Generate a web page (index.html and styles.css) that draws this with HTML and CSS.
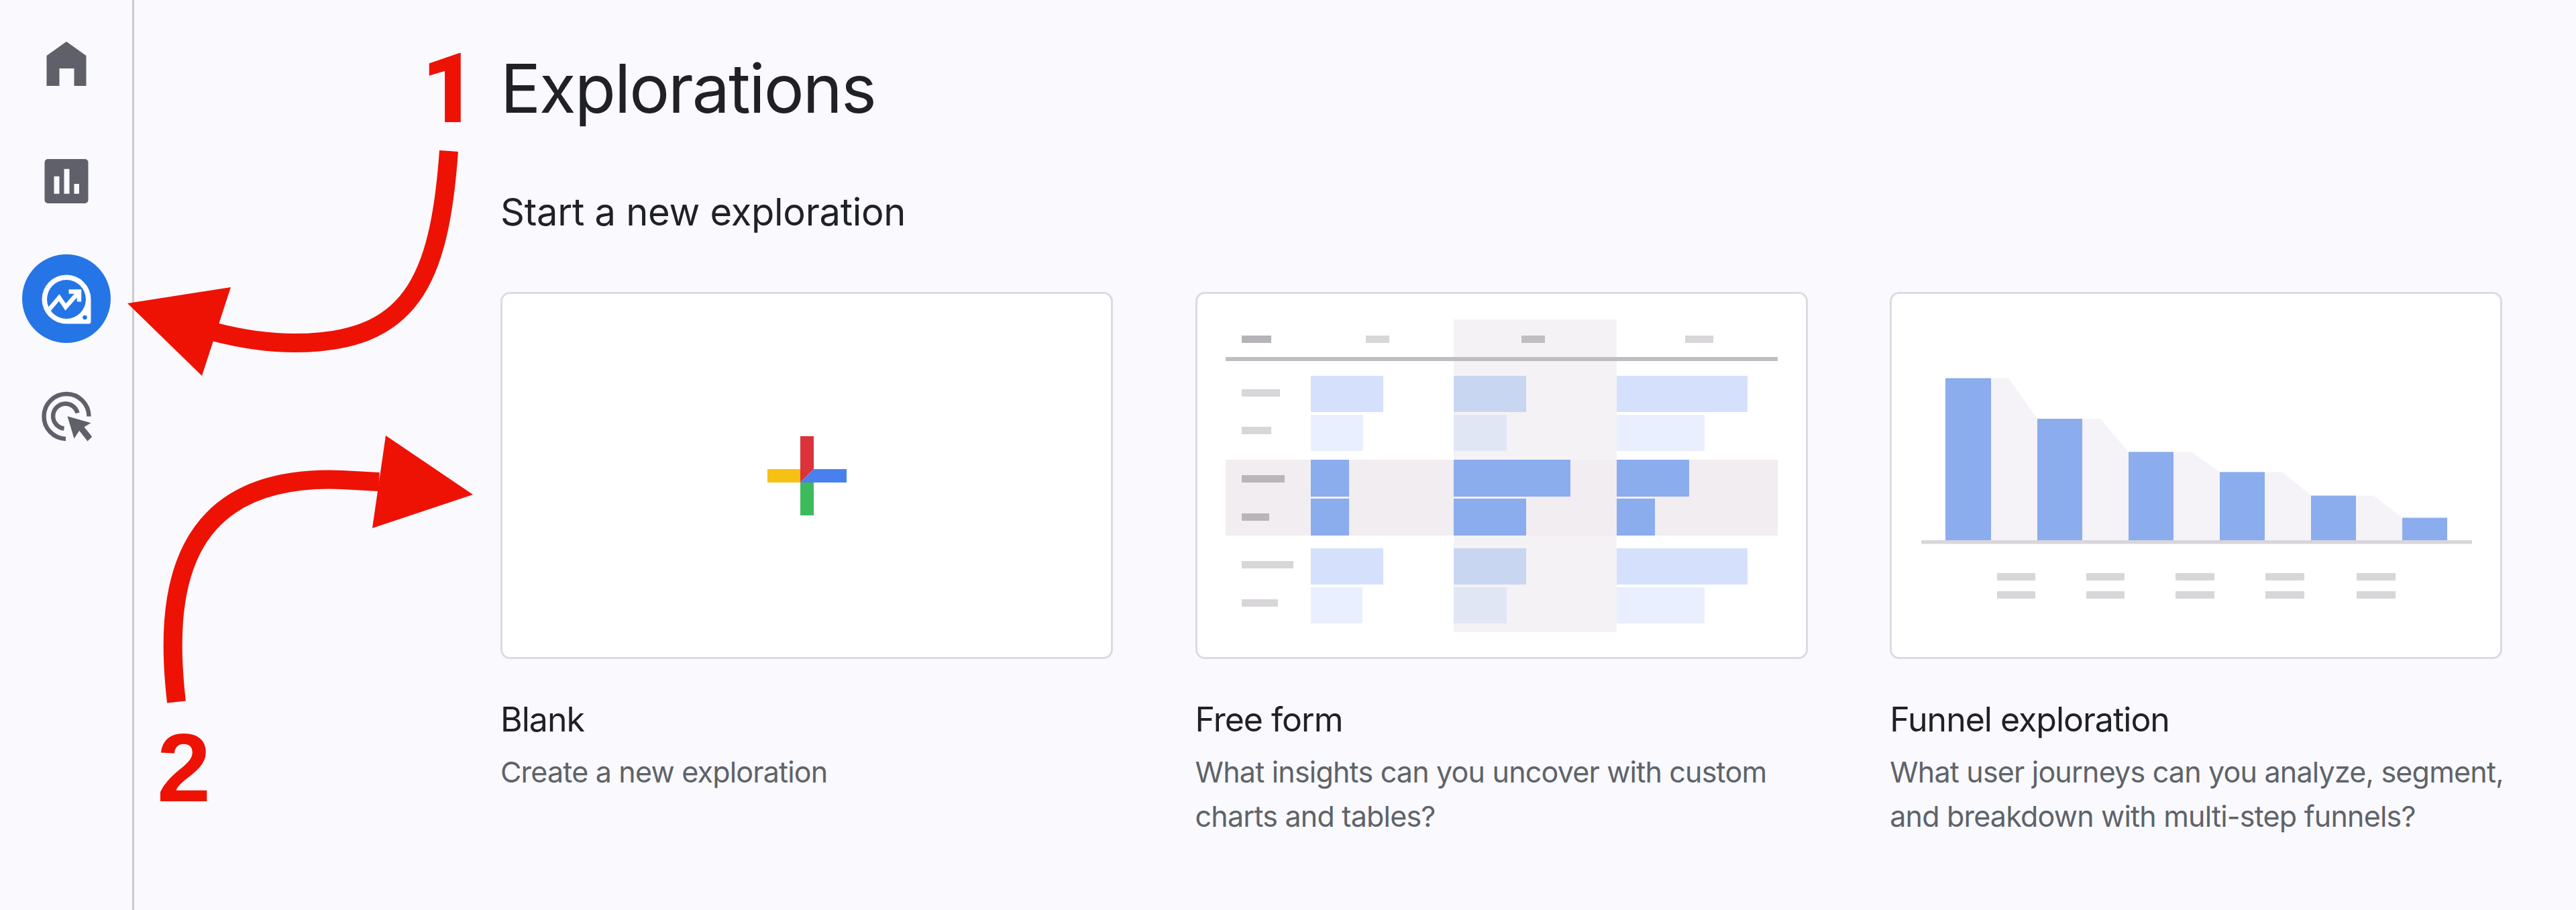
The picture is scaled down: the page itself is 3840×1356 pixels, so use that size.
FILE: index.html
```html
<!DOCTYPE html>
<html lang="en">
<head>
    <meta charset="UTF-8">
    <meta name="viewport" content="width=device-width, initial-scale=1.0">
    <title>Explorations</title>
    <link rel="stylesheet" href="styles.css">
</head>
<body>
    <nav class="sidebar">
        <a class="nav-item">
            <svg class="nav-icon" viewBox="32.5 29 132 132"><path d="M69 83 98.5 62 128 83v45h-18v-26H88v26H69z"/></svg>
        </a>
        <a class="nav-item">
            <svg class="nav-icon" viewBox="32.5 204 132 132">
                <path fill-rule="evenodd" d="M71 237h55a5 5 0 0 1 5 5v56a5 5 0 0 1-5 5H71a5 5 0 0 1-5-5v-56a5 5 0 0 1 5-5zM80 262.700v26h8v-26zM95 251.700v37h8v-37zM110 274v14.700h7.500V274z"/>
            </svg>
        </a>
        <a class="nav-item active">
            <svg class="nav-icon" viewBox="32.5 379.500 132 132">
                <path class="ring" d="M98.500 410a36.500 36.500 0 0 1 36.500 36.500V480a3 3 0 0 1-3 3H98.500a36.500 36.500 0 0 1 0-73z"/>
                <circle class="hole" cx="98.500" cy="446.500" r="29"/>
                <circle class="hole" cx="126" cy="473.500" r="3.300"/>
                <path class="trend" d="M70 465 87.700 444 97.300 458 115 438"/>
                <path class="trend" d="M102 435h15.500v15"/>
            </svg>
        </a>
        <a class="nav-item">
            <svg class="nav-icon" viewBox="32.500 555.500 132 132">
                <path class="arc" d="M132 622a33.500 33.500 0 1 0-34.500 33.500"/>
                <path class="arc" d="M115 617a18.500 18.500 0 1 0-20 23"/>
                <path d="M100 621.700 135 631.700 125 637.700 136.700 652.300 130 659 117.700 643.300 110 655z"/>
            </svg>
        </a>
    </nav>

    <main class="content">
        <h1>Explorations</h1>
        <h2>Start a new exploration</h2>

        <div class="templates">
            <section class="template">
                <div class="thumb">
                    <svg viewBox="2 2 907 541">
                        <path class="plus-red" d="M446 214h20v49l-20 20z"/>
                        <path class="plus-yellow" d="M397 263h49v20h-49z"/>
                        <path class="plus-blue" d="M466 263h49v20h-69z"/>
                        <path class="plus-green" d="M446 283h20v49h-20z"/>
                    </svg>
                </div>
                <h3>Blank</h3>
                <p>Create a new exploration</p>
            </section>

            <section class="template">
                <div class="thumb">
                    <svg viewBox="1 2 907 541">
                        <rect class="col-hl" x="383" y="40" width="243" height="466"/>
                        <rect class="band" x="43" y="249" width="823" height="113"/>

                        <rect class="chip-dark" x="67" y="64" width="44" height="11"/>
                        <rect class="chip" x="252" y="64" width="35" height="11"/>
                        <rect class="chip-mid" x="484" y="64" width="35" height="11"/>
                        <rect class="chip" x="728" y="64" width="42" height="11"/>
                        <rect class="rule" x="43" y="96" width="823" height="6"/>

                        <rect class="chip" x="67" y="144" width="57" height="11"/>
                        <rect class="chip" x="67" y="200" width="44" height="11"/>
                        <rect class="chip-band" x="67" y="272" width="64" height="11"/>
                        <rect class="chip-band" x="67" y="329" width="41" height="11"/>
                        <rect class="chip" x="67" y="400" width="77" height="11"/>
                        <rect class="chip" x="67" y="457" width="54" height="11"/>

                        <rect class="bar-soft" x="170" y="124" width="108" height="54"/>
                        <rect class="bar-soft-col" x="383" y="124" width="108" height="54"/>
                        <rect class="bar-soft" x="626" y="124" width="195" height="54"/>
                        <rect class="bar-pale" x="170" y="182" width="78" height="54"/>
                        <rect class="bar-pale-col" x="383" y="182" width="79" height="54"/>
                        <rect class="bar-pale" x="626" y="182" width="131" height="54"/>

                        <rect class="bar" x="170" y="249" width="57" height="55"/>
                        <rect class="bar" x="383" y="249" width="174" height="55"/>
                        <rect class="bar" x="626" y="249" width="108" height="55"/>
                        <rect class="bar" x="170" y="307" width="57" height="55"/>
                        <rect class="bar" x="383" y="307" width="108" height="55"/>
                        <rect class="bar" x="626" y="307" width="57" height="55"/>

                        <rect class="bar-soft" x="170" y="381" width="108" height="54"/>
                        <rect class="bar-soft-col" x="383" y="381" width="108" height="54"/>
                        <rect class="bar-soft" x="626" y="381" width="195" height="54"/>
                        <rect class="bar-pale" x="170" y="439" width="77" height="54"/>
                        <rect class="bar-pale-col" x="383" y="439" width="79" height="54"/>
                        <rect class="bar-pale" x="626" y="439" width="131" height="54"/>
                    </svg>
                </div>
                <h3>Free form</h3>
                <p>What insights can you uncover with custom charts and tables?</p>
            </section>

            <section class="template">
                <div class="thumb">
                    <svg viewBox="2 2 907 541">
                        <path class="drop" d="M150 127.500h26L219 188v181h-69z"/>
                        <path class="drop" d="M286 188h27l42 49.400V369h-69z"/>
                        <path class="drop" d="M422 237.400h27l42 30V369h-69z"/>
                        <path class="drop" d="M558 267.400h27l42 35.100V369h-69z"/>
                        <path class="drop" d="M694 302.500h26l43 33V369h-69z"/>

                        <rect class="axis" x="46" y="369" width="821" height="5.500"/>

                        <rect class="bar" x="82" y="127.500" width="68" height="241.500"/>
                        <rect class="bar" x="219" y="188" width="67" height="181"/>
                        <rect class="bar" x="355" y="237.400" width="67" height="131.600"/>
                        <rect class="bar" x="491" y="267.400" width="67" height="101.600"/>
                        <rect class="bar" x="627" y="302.500" width="67" height="66.500"/>
                        <rect class="bar" x="763" y="335.500" width="67" height="33.500"/>

                        <rect class="chip" x="159" y="418" width="57" height="11"/>
                        <rect class="chip" x="292" y="418" width="57" height="11"/>
                        <rect class="chip" x="425" y="418" width="58" height="11"/>
                        <rect class="chip" x="559" y="418" width="58" height="11"/>
                        <rect class="chip" x="695" y="418" width="58" height="11"/>
                        <rect class="chip" x="159" y="445" width="57" height="11"/>
                        <rect class="chip" x="292" y="445" width="57" height="11"/>
                        <rect class="chip" x="425" y="445" width="58" height="11"/>
                        <rect class="chip" x="559" y="445" width="58" height="11"/>
                        <rect class="chip" x="695" y="445" width="58" height="11"/>
                    </svg>
                </div>
                <h3>Funnel exploration</h3>
                <p>What user journeys can you analyze, segment, and breakdown with multi-step funnels?</p>
            </section>
        </div>
    </main>

    <!-- red annotations drawn on top of the screenshot -->
    <svg class="arrows" viewBox="0 0 3840 1356">
        <path class="arrow-line" d="M669 225C655 420 612 511 439 511 400 511 360 505 321 495"/>
        <path class="arrow-head" d="M190 452 344 428 301 560z"/>
        <path class="arrow-line" d="M263 1046C245 890 260 705 510 715L565 718"/>
        <path class="arrow-head" d="M575 649 705 737 555 787z"/>
    </svg>
    <span class="step step-one">1</span>
    <span class="step step-two">2</span>
</body>
</html>
```

FILE: styles.css
```css
body {
    margin: 0;
    height: 1356px;
    overflow: hidden;
    display: flex;
    background-color: #f9f9fe;
    font-family: Inter, "Liberation Sans", sans-serif;
    color: #202124;
}

/* Left rail */
.sidebar {
    width: 197px;
    flex-shrink: 0;
    box-sizing: content-box;
    border-right: 3px solid #c9cad0;
    display: flex;
    flex-direction: column;
    align-items: center;
    gap: 43px;
    padding-top: 29px;
}

.nav-item {
    width: 132px;
    height: 132px;
    border-radius: 50%;
}

.nav-item.active { background-color: #2575e6; }

.nav-icon {
    display: block;
    width: 132px;
    height: 132px;
    fill: #5f6069;
}

.ring { fill: #ffffff; }
.hole { fill: #2575e6; }
.trend { fill: none; stroke: #ffffff; stroke-width: 6.5; }
.arc { fill: none; stroke: #5f6069; stroke-width: 6.5; }

/* Main area */
.content {
    flex: 1;
    padding: 71px 100px 0 546px;
}

h1 {
    margin: 0;
    font-size: 100px;
    line-height: 122px;
    font-weight: 400;
    letter-spacing: -2px;
}

h2 {
    margin: 91px 0 0;
    font-size: 56px;
    line-height: 64px;
    font-weight: 400;
    letter-spacing: -0.250px;
}

.templates {
    display: grid;
    grid-template-columns: 913px 913px 913px;
    column-gap: 122.600px;
    margin-top: 87px;
}

.thumb {
    height: 541px;
    background-color: #ffffff;
    border: 3px solid #dadce4;
    border-radius: 14px;
    overflow: hidden;
}

.thumb svg { display: block; width: 907px; height: 541px; }

h3 {
    margin: 60px 0 0;
    font-size: 50px;
    line-height: 60px;
    font-weight: 400;
    letter-spacing: -1px;
}

.template p {
    margin: 15px -15px 0 0;
    font-size: 43px;
    line-height: 66px;
    color: #5f6368;
    letter-spacing: -0.800px;
}

/* Blank plus */
.plus-red { fill: #dc3239; }
.plus-yellow { fill: #f6c015; }
.plus-blue { fill: #4a80ee; }
.plus-green { fill: #3dba5c; }

/* Free form table */
.col-hl { fill: #f4f2f5; }
.band { fill: #f1edf0; }
.chip { fill: #d8d6d9; }
.chip-mid { fill: #c0bec2; }
.chip-dark { fill: #b5b3b7; }
.chip-band { fill: #b9b5ba; }
.rule { fill: #bfbdc2; }
.bar { fill: #8baced; }
.bar-soft { fill: #d5e1fc; }
.bar-soft-col { fill: #c9d6f2; }
.bar-pale { fill: #e9effe; }
.bar-pale-col { fill: #e1e6f4; }

/* Funnel */
.drop { fill: #f5f3f7; }
.axis { fill: #d8d6da; }

/* Annotations */
.arrows {
    position: absolute;
    left: 0;
    top: 0;
    width: 3840px;
    height: 1356px;
    pointer-events: none;
}

.arrow-line { fill: none; stroke: #ee1204; stroke-width: 28; }
.arrow-head { fill: #ee1204; }

.step {
    position: absolute;
    font-weight: bold;
    font-size: 144px;
    line-height: 146px;
    color: #ee1204;
}

.step-one { left: 628px; top: 60px; font-family: Roboto, sans-serif; font-weight: 900; }
.step-two { left: 234px; top: 1072px; font-family: "Liberation Sans", sans-serif; }
```
